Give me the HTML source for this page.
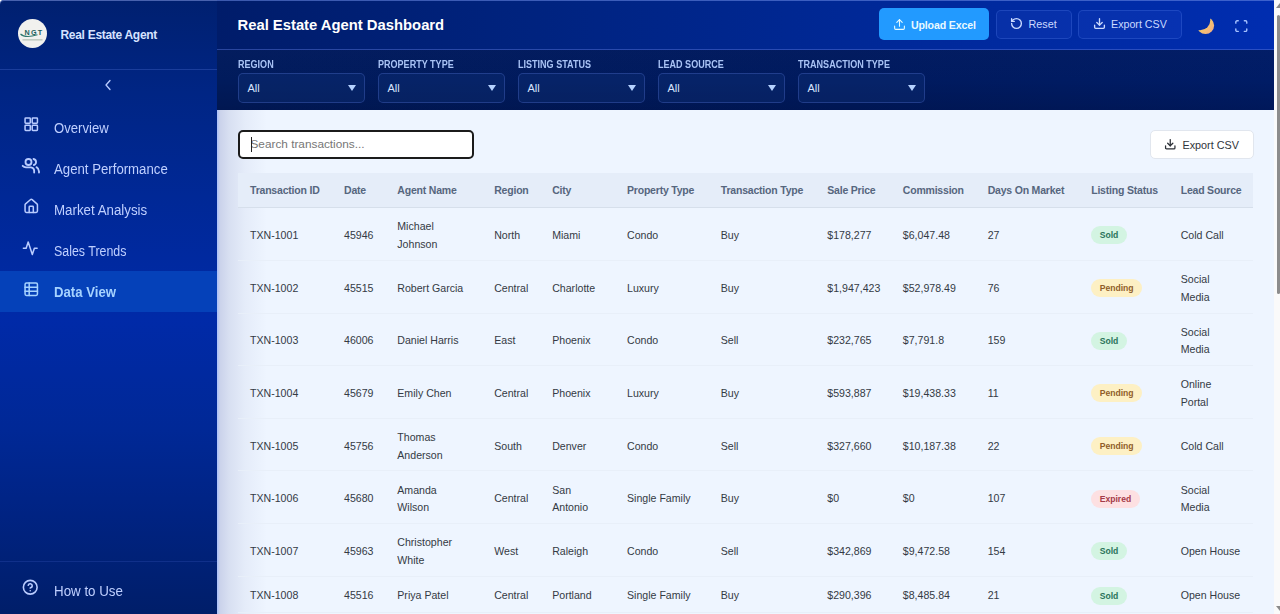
<!DOCTYPE html>
<html><head><meta charset="utf-8">
<style>
*{box-sizing:border-box;margin:0;padding:0}
html,body{width:1280px;height:614px;overflow:hidden;background:#fff;font-family:"Liberation Sans",sans-serif}
#sb{position:absolute;left:0;top:0;width:217px;height:614px;
 background:linear-gradient(180deg,#002070 0%,#002584 15%,#002896 32%,#002aa8 52%,#002896 70%,#002382 84%,#001e69 100%);
 border-top-left-radius:4px;z-index:3;box-shadow:inset 0 1px 0 rgba(90,115,190,0.8)}
#sb .div{position:absolute;left:0;width:217px;height:1px;background:rgba(120,150,255,0.22)}
.logo{position:absolute;left:18px;top:19px;width:29px;height:29px;border-radius:50%;background:#f1f1ee;overflow:hidden}
.brand{position:absolute;left:60.5px;top:28px;font-size:12px;font-weight:700;color:#d6e3ff;letter-spacing:-0.3px;white-space:nowrap}
.nav{position:absolute;left:0;width:217px;height:41px}
.nav svg{position:absolute;left:23px;top:13px;width:16.5px;height:16.5px}
.nav span{position:absolute;left:54px;top:13.4px;font-size:14px;transform-origin:0 50%;color:#bfd0ff;white-space:nowrap;line-height:16px}
.nav.act{background:#0541b9}
#htu span{top:16.6px;transform:scaleX(0.953)}
.nav.act span{font-weight:700;color:#a6d3ff}
#hd{position:absolute;left:217px;top:0;width:1057px;height:50px;
 background:linear-gradient(90deg,#001c6a 0%,#00237f 30%,#002896 60%,#002db0 100%);
 border-bottom:1px solid rgba(90,120,220,0.45);z-index:1}
#hd h1{position:absolute;left:20.5px;top:16px;font-size:14.8px;font-weight:700;color:#fff;white-space:nowrap;line-height:18px}
.btn{position:absolute;border-radius:5px;white-space:nowrap}
.btn svg{position:absolute}
.btn span{position:absolute;line-height:14px}
#fl{position:absolute;left:217px;top:50px;width:1057px;height:60px;
 background:linear-gradient(180deg,rgba(20,40,110,0.12) 0%,rgba(0,0,0,0) 50%,rgba(0,0,20,0.15) 100%),linear-gradient(90deg,#011b5c 0%,#001a5e 60%,#001c66 100%);z-index:1}
.flab{position:absolute;top:58.6px;font-size:10.4px;transform:scaleX(0.87);transform-origin:0 0;font-weight:700;color:#a9c3f5;white-space:nowrap;line-height:11px}
.sel{position:absolute;top:73.3px;width:127px;height:29.5px;border-radius:5px;background:rgba(20,55,130,0.3);border:1px solid rgba(70,100,190,0.42)}
.sel span{position:absolute;left:9px;top:7.1px;font-size:11px;color:#d6e2ff;line-height:14px}
.sel i{position:absolute;left:109.5px;top:10.5px;width:0;height:0;border-left:4px solid transparent;border-right:4px solid transparent;border-top:6.5px solid #b5d2ff}
#mn{position:absolute;left:217px;top:110px;width:1057px;height:504px;background:#eef5ff;overflow:hidden}
#mn .shadow{position:absolute;left:0;top:0;width:50px;height:504px;background:linear-gradient(90deg,rgba(40,90,240,0.35) 0px,rgba(90,100,170,0.24) 3px,rgba(100,110,170,0.16) 12px,rgba(120,130,180,0.08) 28px,rgba(255,255,255,0) 50px)}
#search{position:absolute;left:20.5px;top:20px;width:236px;height:28.6px;background:#fff;border:2px solid #1b1b1b;border-radius:5px}
#search span{position:absolute;left:11px;top:5px;font-size:11.8px;color:#767676;line-height:14px;white-space:nowrap}
#search b{position:absolute;left:11px;top:5px;width:1px;height:15px;background:#222}
#exp2{position:absolute;left:933px;top:20px;width:103.5px;height:28.5px;background:#fff;border:1px solid #e1e6ee;border-radius:5px}
table{position:absolute;left:21px;top:63.3px;border-collapse:collapse;table-layout:fixed;width:1015px}
th{height:34.4px;background:#e5edf9;text-align:left;padding:0 0 0 12px;font-size:10.5px;font-weight:700;color:#56667e;letter-spacing:-0.2px;border-bottom:1.5px solid #d6dfeb;white-space:nowrap;vertical-align:middle}
td{height:52.67px;padding:4px 0 0 12px;font-size:10.6px;color:#343a44;line-height:17.8px;border-bottom:1px solid #e8eff9;vertical-align:middle;white-space:nowrap}
tr.s td{height:36px}
.bd{display:inline-block;height:18px;line-height:18px;position:relative;top:-0.6px;border-radius:9px;padding:0 8.5px;font-size:8.6px;font-weight:700}
.sold{background:#d3f4e2;color:#2a735a}
.pend{background:#fdf0c4;color:#905e2a}
.expd{background:#fde0e2;color:#a63a48}
#scr{position:absolute;left:1274px;top:0;width:6px;height:614px;background:#fafafa;z-index:5}
#scr .th{position:absolute;left:2.5px;top:15px;width:3.5px;height:279px;background:#8c8c8c;border-radius:2px}
#scr .ar{position:absolute;left:2px;top:3px;width:0;height:0;border-left:4px solid transparent;border-right:0 solid transparent;border-bottom:5px solid #8a8a8a}
#scr .ab{position:absolute;left:2px;top:606px;width:0;height:0;border-left:4px solid transparent;border-top:5px solid #8a8a8a}
</style></head><body>

<div id="sb">
 <div class="logo">
  <svg width="29" height="29" viewBox="0 0 29 29"><text x="16" y="16" font-family="Liberation Sans" font-weight="700" font-size="7.2" fill="#1d5f5c" text-anchor="middle" letter-spacing="1.2">NGT</text><path d="M2.5 15 Q7 19.5 19.5 15.8" stroke="#2f7a6e" stroke-width="1.1" fill="none"/><rect x="4.5" y="20.2" width="20" height="1.3" fill="#b8c4b8"/></svg>
 </div>
 <div class="brand">Real Estate Agent</div>
 <div class="div" style="top:69px"></div>
 <svg style="position:absolute;left:103px;top:79px" width="10" height="12" viewBox="0 0 10 12"><path d="M7 1.5 L3 6 L7 10.5" stroke="#b9ccff" stroke-width="1.3" fill="none" stroke-linecap="round" stroke-linejoin="round"/></svg>

 <div class="nav" style="top:107px"><svg style="left:22.5px;top:8.8px" viewBox="0 0 24 24" fill="none" stroke="#b9ccff" stroke-width="2.2" stroke-linecap="round" stroke-linejoin="round"><rect width="7.6" height="7.6" x="3" y="3" rx="1"/><rect width="7.6" height="7.6" x="13.4" y="3" rx="1"/><rect width="7.6" height="7.6" x="13.4" y="13.4" rx="1"/><rect width="7.6" height="7.6" x="3" y="13.4" rx="1"/></svg><span style="transform:scaleX(0.937)">Overview</span></div>
 <div class="nav" style="top:148px"><svg style="left:21px;top:8px;width:20px;height:20px" viewBox="0 0 24 24" fill="none" stroke="#b9ccff" stroke-width="2.2" stroke-linecap="round" stroke-linejoin="round"><circle cx="9" cy="7.2" r="3.6"/><path d="M2 11.8 Q3.5 13.4 6 13.6 H12 Q15.6 13.9 15.8 17.6 V19.8"/><path d="M15 3.6 A3.7 3.7 0 0 1 15.4 10.8"/><path d="M18.6 13.4 Q21.4 15 21.6 18.6 V19.8"/></svg><span style="transform:scaleX(0.943)">Agent Performance</span></div>
 <div class="nav" style="top:189px"><svg style="left:22.6px;top:8.8px" viewBox="0 0 24 24" fill="none" stroke="#b9ccff" stroke-width="2.2" stroke-linecap="round" stroke-linejoin="round"><path d="M15 21v-8a1 1 0 0 0-1-1h-4a1 1 0 0 0-1 1v8"/><path d="M3 10a2 2 0 0 1 .709-1.528l7-5.999a2 2 0 0 1 2.582 0l7 5.999A2 2 0 0 1 21 10v9a2 2 0 0 1-2 2H5a2 2 0 0 1-2-2z"/></svg><span style="transform:scaleX(0.951)">Market Analysis</span></div>
 <div class="nav" style="top:230px"><svg style="left:22.3px;top:9.7px" viewBox="0 0 24 24" fill="none" stroke="#b9ccff" stroke-width="2.2" stroke-linecap="round" stroke-linejoin="round"><path d="M22 12h-4l-3 9L9 3l-3 9H2"/></svg><span style="transform:scaleX(0.887)">Sales Trends</span></div>
 <div class="nav act" style="top:271px"><svg style="left:22.6px;top:9.8px" viewBox="0 0 24 24" fill="none" stroke="#a6d3ff" stroke-width="2.2" stroke-linecap="round" stroke-linejoin="round"><rect width="18" height="18" x="3" y="3" rx="2"/><path d="M3 9h18"/><path d="M3 15h18"/><path d="M9 3v18"/></svg><span style="transform:scaleX(0.94)">Data View</span></div>

 <div class="div" style="top:561px;background:rgba(100,130,240,0.16)"></div>
 <div class="nav" style="top:566px" id="htu"><svg style="left:22.3px;top:12.8px" viewBox="0 0 24 24" fill="none" stroke="#b9ccff" stroke-width="2.3" stroke-linecap="round" stroke-linejoin="round"><circle cx="12" cy="12" r="10"/><path d="M9.09 9a3 3 0 0 1 5.83 1c0 2-3 3-3 3"/><path d="M12 17h.01"/></svg><span>How to Use</span></div>
</div>

<div id="hd"><div style="position:absolute;left:0;top:0;width:1057px;height:1px;background:rgba(110,140,230,0.55)"></div>
 <h1>Real Estate Agent Dashboard</h1>
 <div class="btn" style="left:661.5px;top:8px;width:110.5px;height:32px;background:#229aff">
  <svg style="left:14px;top:10.2px" width="13" height="13" viewBox="0 0 24 24" fill="none" stroke="#e6fbff" stroke-width="2" stroke-linecap="round" stroke-linejoin="round"><path d="M21 15v4a2 2 0 0 1-2 2H5a2 2 0 0 1-2-2v-4"/><polyline points="17 8 12 3 7 8"/><line x1="12" x2="12" y1="3" y2="15"/></svg>
  <span style="left:32.5px;top:10.4px;font-size:10.6px;font-weight:700;color:#e9f9ff;letter-spacing:-0.15px">Upload Excel</span>
 </div>
 <div class="btn" style="left:779px;top:10px;width:75.5px;height:28.6px;background:rgba(60,100,230,0.12);border:1px solid rgba(110,150,255,0.22)">
  <svg style="left:13px;top:6.3px" width="13" height="13" viewBox="0 0 24 24" fill="none" stroke="#cbdaff" stroke-width="2.5" stroke-linecap="round" stroke-linejoin="round"><path d="M3 12a9 9 0 1 0 9-9 9.75 9.75 0 0 0-6.74 2.74L3 8"/><path d="M3 3v5h5"/></svg>
  <span style="left:31.5px;top:5.7px;font-size:10.8px;color:#cbdaff">Reset</span>
 </div>
 <div class="btn" style="left:861px;top:10px;width:103.5px;height:28.5px;background:rgba(60,100,230,0.12);border:1px solid rgba(110,150,255,0.22)">
  <svg style="left:14px;top:6.3px" width="13" height="13" viewBox="0 0 24 24" fill="none" stroke="#cbdaff" stroke-width="2.5" stroke-linecap="round" stroke-linejoin="round"><path d="M21 15v4a2 2 0 0 1-2 2H5a2 2 0 0 1-2-2v-4"/><polyline points="7 10 12 15 17 10"/><line x1="12" x2="12" y1="15" y2="3"/></svg>
  <span style="left:32px;top:5.7px;font-size:10.7px;color:#cbdaff">Export CSV</span>
 </div>
 <svg style="position:absolute;left:978px;top:14px" width="22" height="22" viewBox="0 0 22 22"><defs><mask id="mm"><rect width="22" height="22" fill="#fff"/><circle cx="5.1" cy="6.1" r="10.2" fill="#000"/></mask><linearGradient id="mg" x1="0" y1="0" x2="1" y2="1"><stop offset="0" stop-color="#fbe7b0"/><stop offset="0.5" stop-color="#f5c46c"/><stop offset="1" stop-color="#f2a98a"/></linearGradient></defs><circle cx="10.5" cy="11.5" r="8.6" fill="url(#mg)" mask="url(#mm)"/></svg>
 <svg style="position:absolute;left:1016.6px;top:18.8px" width="14.6" height="14.2" viewBox="0 0 24 24" preserveAspectRatio="none" fill="none" stroke="#a6c2ff" stroke-width="2.3" stroke-linecap="round" stroke-linejoin="round"><path d="M3 7V5a2 2 0 0 1 2-2h2"/><path d="M17 3h2a2 2 0 0 1 2 2v2"/><path d="M21 17v2a2 2 0 0 1-2 2h-2"/><path d="M7 21H5a2 2 0 0 1-2-2v-2"/></svg>
</div>

<div id="fl">
</div>
<div class="flab" style="left:237.5px;z-index:2">REGION</div>
<div class="flab" style="left:377.5px;z-index:2">PROPERTY TYPE</div>
<div class="flab" style="left:517.5px;z-index:2">LISTING STATUS</div>
<div class="flab" style="left:657.5px;z-index:2">LEAD SOURCE</div>
<div class="flab" style="left:797.5px;z-index:2">TRANSACTION TYPE</div>
<div class="sel" style="left:237.5px;z-index:2"><span>All</span><i></i></div>
<div class="sel" style="left:377.5px;z-index:2"><span>All</span><i></i></div>
<div class="sel" style="left:517.5px;z-index:2"><span>All</span><i></i></div>
<div class="sel" style="left:657.5px;z-index:2"><span>All</span><i></i></div>
<div class="sel" style="left:797.5px;z-index:2"><span>All</span><i></i></div>

<div id="mn">
 <div class="shadow"></div>
 <div id="search"><span>Search transactions...</span><b></b></div>
 <div id="exp2">
  <svg style="position:absolute;left:12.5px;top:6.5px" width="12.5" height="12.5" viewBox="0 0 24 24" fill="none" stroke="#2b2f36" stroke-width="2.4" stroke-linecap="round" stroke-linejoin="round"><path d="M21 15v4a2 2 0 0 1-2 2H5a2 2 0 0 1-2-2v-4"/><polyline points="7 10 12 15 17 10"/><line x1="12" x2="12" y1="15" y2="3"/></svg>
  <span style="position:absolute;left:31.5px;top:6.5px;font-size:10.8px;color:#30343a;line-height:14px;white-space:nowrap">Export CSV</span>
 </div>
 <table>
  <colgroup><col style="width:94px"><col style="width:53.3px"><col style="width:96.9px"><col style="width:58px"><col style="width:74.8px"><col style="width:93.8px"><col style="width:106.5px"><col style="width:75.5px"><col style="width:84.9px"><col style="width:103.5px"><col style="width:89.5px"><col style="width:84.3px"></colgroup>
  <thead><tr><th>Transaction ID</th><th>Date</th><th>Agent Name</th><th>Region</th><th>City</th><th>Property Type</th><th>Transaction Type</th><th>Sale Price</th><th>Commission</th><th>Days On Market</th><th>Listing Status</th><th>Lead Source</th></tr></thead>
  <tbody>
   <tr><td>TXN-1001</td><td>45946</td><td>Michael<br>Johnson</td><td>North</td><td>Miami</td><td>Condo</td><td>Buy</td><td>$178,277</td><td>$6,047.48</td><td>27</td><td><span class="bd sold">Sold</span></td><td>Cold Call</td></tr>
   <tr><td>TXN-1002</td><td>45515</td><td>Robert Garcia</td><td>Central</td><td>Charlotte</td><td>Luxury</td><td>Buy</td><td>$1,947,423</td><td>$52,978.49</td><td>76</td><td><span class="bd pend">Pending</span></td><td>Social<br>Media</td></tr>
   <tr><td>TXN-1003</td><td>46006</td><td>Daniel Harris</td><td>East</td><td>Phoenix</td><td>Condo</td><td>Sell</td><td>$232,765</td><td>$7,791.8</td><td>159</td><td><span class="bd sold">Sold</span></td><td>Social<br>Media</td></tr>
   <tr><td>TXN-1004</td><td>45679</td><td>Emily Chen</td><td>Central</td><td>Phoenix</td><td>Luxury</td><td>Buy</td><td>$593,887</td><td>$19,438.33</td><td>11</td><td><span class="bd pend">Pending</span></td><td>Online<br>Portal</td></tr>
   <tr><td>TXN-1005</td><td>45756</td><td>Thomas<br>Anderson</td><td>South</td><td>Denver</td><td>Condo</td><td>Sell</td><td>$327,660</td><td>$10,187.38</td><td>22</td><td><span class="bd pend">Pending</span></td><td>Cold Call</td></tr>
   <tr><td>TXN-1006</td><td>45680</td><td>Amanda<br>Wilson</td><td>Central</td><td>San<br>Antonio</td><td>Single Family</td><td>Buy</td><td>$0</td><td>$0</td><td>107</td><td><span class="bd expd">Expired</span></td><td>Social<br>Media</td></tr>
   <tr><td>TXN-1007</td><td>45963</td><td>Christopher<br>White</td><td>West</td><td>Raleigh</td><td>Condo</td><td>Sell</td><td>$342,869</td><td>$9,472.58</td><td>154</td><td><span class="bd sold">Sold</span></td><td>Open House</td></tr>
   <tr class="s"><td>TXN-1008</td><td>45516</td><td>Priya Patel</td><td>Central</td><td>Portland</td><td>Single Family</td><td>Buy</td><td>$290,396</td><td>$8,485.84</td><td>21</td><td><span class="bd sold">Sold</span></td><td>Open House</td></tr>
  </tbody>
 </table>
</div>

<div id="scr"><div class="ar"></div><div class="th"></div><div class="ab"></div></div>
</body></html>
